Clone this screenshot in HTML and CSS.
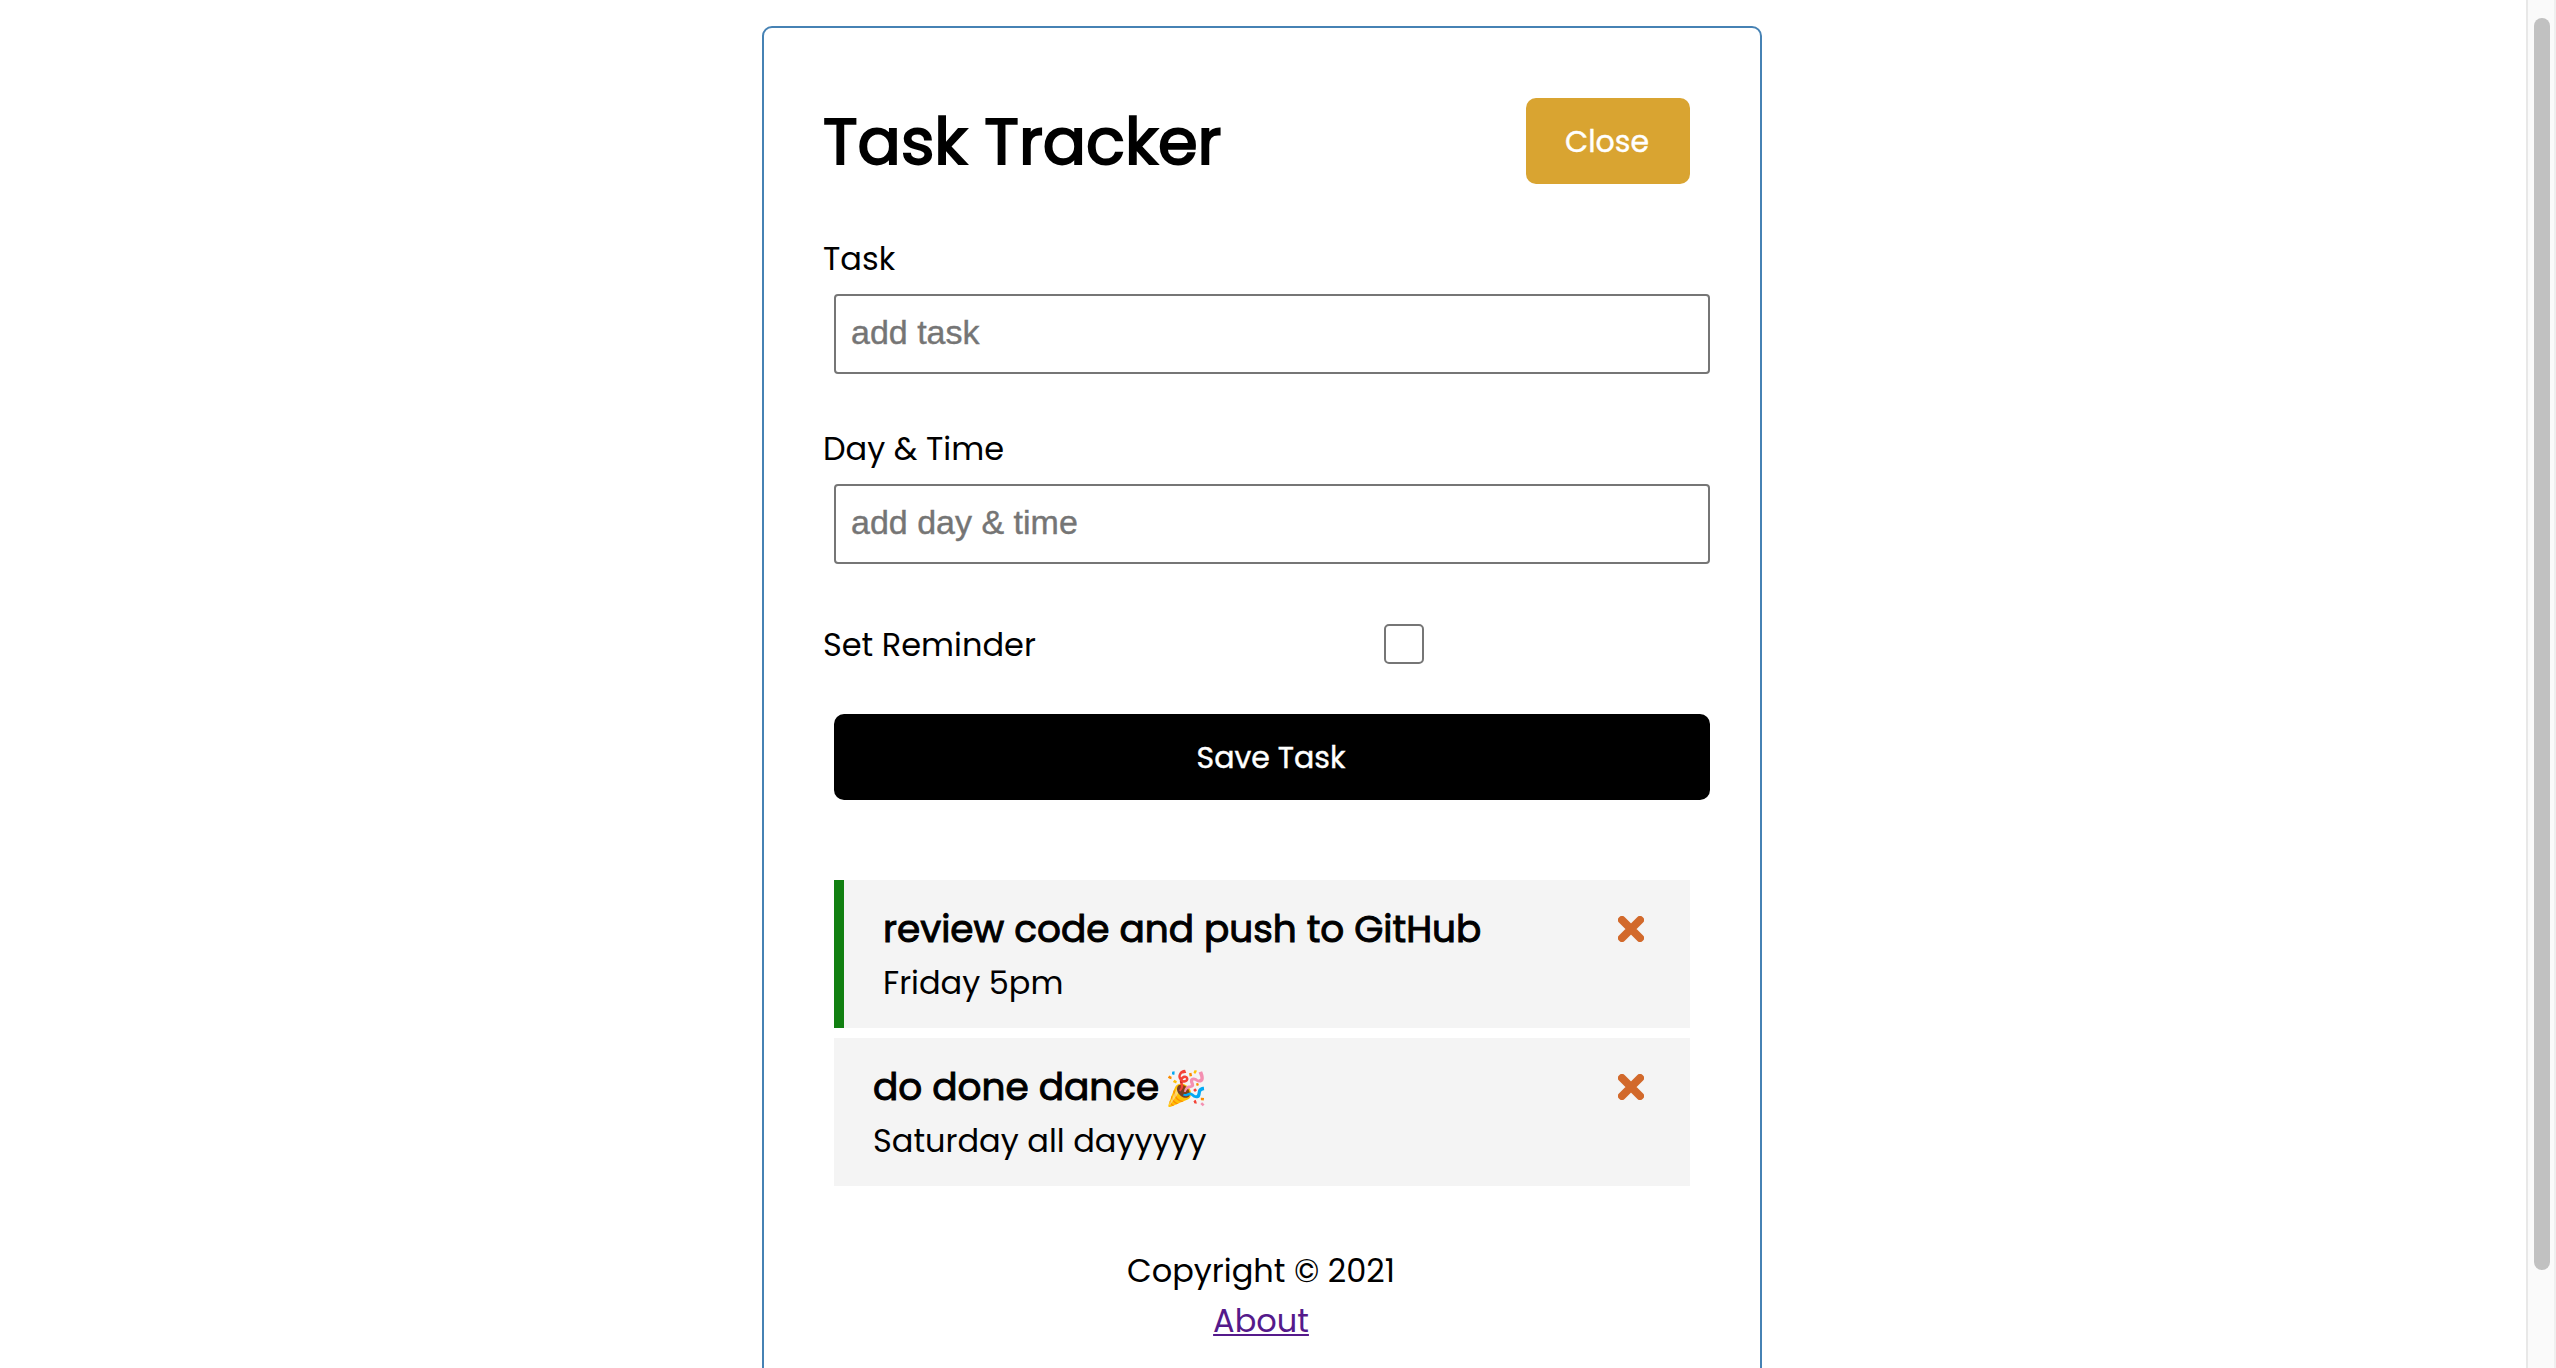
FILE: index.html
```
<!DOCTYPE html>
<html lang="en">
<head>
<meta charset="utf-8">
<title>Task Tracker</title>
<link rel="stylesheet" href="styles.css">
</head>
<body>
<main class="page">
  <div class="container">
    <header class="header">
      <h1 class="title">Task Tracker</h1>
      <button class="btn btn-close">Close</button>
    </header>
    <form class="form">
      <div class="control">
        <label class="label" for="task">Task</label>
        <input class="input" id="task" type="text" placeholder="add task">
      </div>
      <div class="control">
        <label class="label" for="day">Day &amp; Time</label>
        <input class="input" id="day" type="text" placeholder="add day &amp; time">
      </div>
      <div class="control-check">
        <label class="label" for="reminder">Set Reminder</label>
        <input class="checkbox" id="reminder" type="checkbox">
      </div>
      <button class="btn btn-save" type="button">Save Task</button>
    </form>
    <section class="tasks">
      <article class="task reminder">
        <div class="task-head">
          <h3 class="task-title">review code and push to GitHub</h3>
          <svg class="remove" viewBox="0 0 26 26"><path d="M4 4L22 22M22 4L4 22"/></svg>
        </div>
        <p class="task-day">Friday 5pm</p>
      </article>
      <article class="task">
        <div class="task-head">
          <h3 class="task-title">do done dance <span class="emoji">🎉</span></h3>
          <svg class="remove" viewBox="0 0 26 26"><path d="M4 4L22 22M22 4L4 22"/></svg>
        </div>
        <p class="task-day">Saturday all dayyyyy</p>
      </article>
    </section>
    <footer class="footer">
      <p class="copyright">Copyright © 2021</p>
      <a class="about" href="#about">About</a>
    </footer>
  </div>
</main>
<div class="scrollbar"><div class="thumb"></div></div>
</body>
</html>
```
FILE: styles.css
```
* {
  box-sizing: border-box;
  margin: 0;
  padding: 0;
}

body {
  display: flex;
  height: 100vh;
  overflow: hidden;
  background: #fff;
  color: #000;
  font-family: Poppins, Inter, sans-serif;
  font-size: 32px;
}

.page {
  flex: 1;
  display: flex;
  justify-content: center;
  align-items: flex-start;
  padding: 26px 2px 0 0;
}

.container {
  width: 1000px;
  height: 1400px;
  padding: 70px 50px 60px 59px;
  border: 2px solid steelblue;
  border-radius: 10px;
}

.header {
  display: flex;
  justify-content: space-between;
  align-items: center;
  height: 86px;
  margin: 0 20px 51px 0;
}

.title {
  font-size: 64px;
  font-weight: 400;
  line-height: 86px;
  padding-top: 2px;
  -webkit-text-stroke: 2px #000;
}

.btn {
  height: 86px;
  padding: 1px 2px 0 0;
  border: 0;
  border-radius: 10px;
  color: #fff;
  font: 400 30px Poppins, Inter, sans-serif;
  -webkit-text-stroke: 0.4px #fff;
}

.btn-close {
  width: 164px;
  background: #d9a431;
}

.btn-save {
  display: block;
  width: 876px;
  margin: 45px 0 0 11px;
  background: #000;
}

.control {
  margin-bottom: 51px;
}

.label {
  display: block;
  line-height: 48px;
}

.input {
  display: block;
  width: 876px;
  height: 80px;
  margin: 11px 0 0 11px;
  padding: 0 15px 4px;
  border: 2px solid #767676;
  border-radius: 4px;
  font: 34px "Liberation Sans", Arial, sans-serif;
}

.input::placeholder {
  color: #757575;
  -webkit-text-stroke: 0.4px #757575;
}

.control-check {
  display: flex;
  align-items: center;
  justify-content: space-between;
  height: 50px;
  margin-top: 55px;
}

.control-check .label {
  padding-top: 2px;
}

.checkbox {
  appearance: none;
  width: 40px;
  height: 40px;
  margin-right: 286px;
  border: 2px solid #767676;
  border-radius: 5px;
  background: #fff;
}

.tasks {
  display: grid;
  gap: 10px;
  margin: 80px 20px 0 11px;
}

.task {
  height: 148px;
  padding: 21px 46px 0 39px;
  background: #f4f4f4;
}

.reminder {
  border-left: 10px solid #118011;
}

.task-head {
  display: flex;
  align-items: center;
  justify-content: space-between;
}

.task-title {
  font-size: 37.44px;
  font-weight: 400;
  line-height: 56px;
  -webkit-text-stroke: 1px #000;
}

.emoji {
  display: inline-block;
  width: 40px;
  height: 40px;
  margin-left: -4px;
  font-size: 34px;
  line-height: 38px;
  -webkit-text-stroke: 0;
}

.remove {
  width: 26px;
  height: 26px;
  fill: none;
  stroke: #d2692b;
  stroke-width: 8;
  stroke-linecap: round;
}

.task-day {
  margin-top: 2px;
  line-height: 48px;
}

.footer {
  margin: 60px 12px 0 1px;
  line-height: 50px;
  text-align: center;
}

.about {
  color: #551a8b;
  text-decoration-thickness: 2px;
  text-underline-offset: 2px;
}

.scrollbar {
  width: 30px;
  padding: 18px 4px 0 6px;
  border-left: 2px solid #e8e8e8;
  border-right: 2px solid #efefef;
  background: #fafafa;
}

.thumb {
  height: 1252px;
  border-radius: 8px;
  background: #c1c1c1;
}
```
